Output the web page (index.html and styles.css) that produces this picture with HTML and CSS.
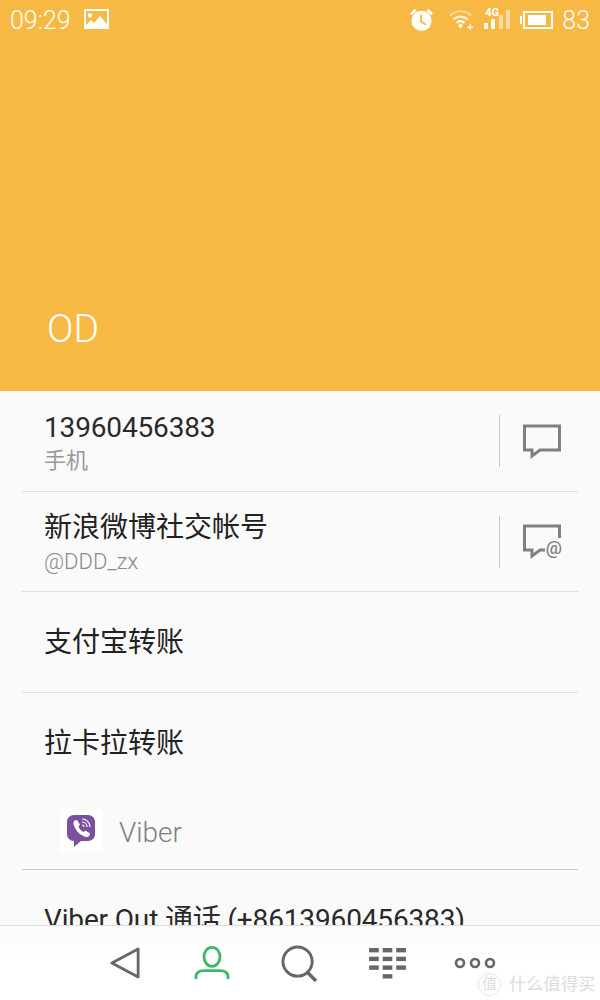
FILE: index.html
```html
<!DOCTYPE html>
<html lang="zh">
<head>
<meta charset="utf-8">
<title>OD</title>
<link rel="stylesheet" href="styles.css">
</head>
<body>
<div class="screen">
  <header class="hero">
    <div class="status">
      <div class="status-left">
        <span class="time">09:29</span>
        <svg class="ic-photo" width="25" height="20" viewBox="0 0 25 20"><path fill="#fff" fill-rule="evenodd" d="M0 0h25v20H0zM2 2v14l5-5 3 3 6-7 7 8V2z"/><circle cx="6" cy="6.500" r="2.200" fill="#fff"/></svg>
      </div>
      <div class="status-right">
        <svg class="ic-alarm" width="25" height="26" viewBox="0 0 26 26"><circle cx="13" cy="14" r="10.500" fill="#fff"/><path d="M2 7l5-4.500M24 7l-5-4.500" stroke="#fff" stroke-width="3" fill="none"/><path d="M12.500 7.500v7l5 3.500" stroke="#F7B944" stroke-width="2" fill="none"/></svg>
        <svg class="ic-wifi" width="25" height="22" viewBox="0 0 26 22"><path d="M1 7.500C7.500 1.500 16.500 1.500 23 7.500" stroke="#fff" stroke-opacity=".45" stroke-width="2.200" fill="none"/><path d="M4.500 11.500C9 7.500 15 7.500 19.500 11.500" stroke="#fff" stroke-opacity=".8" stroke-width="2.200" fill="none"/><path d="M8 15c2.500-2.200 5.500-2.200 8 0" stroke="#fff" stroke-width="2.200" fill="none"/><path d="M9.500 18l2.500-2.500 2.500 2.500-2.500 2.500z" fill="#fff"/><path d="M19 19.500h6M22 16.500v6" stroke="#fff" stroke-width="1.500"/></svg>
        <div class="signal">
          <span class="net">4G</span>
          <svg class="bars" width="27" height="19" viewBox="0 0 27 19"><rect x="0" y="13" width="4" height="6" fill="#fff"/><rect x="7" y="9" width="4" height="10" fill="#fff"/><rect x="15" y="5" width="4" height="14" fill="#fff" fill-opacity=".5"/><rect x="22" y="0" width="4" height="19" fill="#fff" fill-opacity=".5"/></svg>
        </div>
        <svg class="ic-batt" width="33" height="18" viewBox="0 0 33 18"><path fill="#fff" fill-rule="evenodd" d="M3 0h30v18H3zM5 2v14h26V2z"/><rect x="0" y="5" width="2" height="8" fill="#fff"/><rect x="8" y="4" width="18" height="10" fill="#fff"/></svg>
        <span class="batt">83</span>
      </div>
    </div>
    <div class="name">OD</div>
  </header>

  <main class="list">
    <div class="row tall">
      <div class="text">
        <div class="primary num">13960456383</div>
        <div class="secondary">手机</div>
      </div>
      <div class="action">
        <svg width="38" height="35" viewBox="0 0 38 35"><path d="M1.500 2h35v24H17l-8 6v-6H1.500z" fill="none" stroke="#808080" stroke-width="3"/></svg>
      </div>
    </div>
    <div class="row tall">
      <div class="text">
        <div class="primary">新浪微博社交帐号</div>
        <div class="secondary handle">@DDD_zx</div>
      </div>
      <div class="action">
        <div class="at-wrap">
          <svg width="38" height="35" viewBox="0 0 38 35"><path d="M22 26H17l-8 6v-6H1.500V2h35v12" fill="none" stroke="#808080" stroke-width="3"/></svg>
          <span class="at">@</span>
        </div>
      </div>
    </div>
    <div class="row plain"><div class="primary">支付宝转账</div></div>
    <div class="row plain last"><div class="primary">拉卡拉转账</div></div>
    <div class="section">
      <div class="app-tile">
        <svg width="30" height="34" viewBox="0 0 30 34"><path fill="#7B519D" d="M8 1h14c4 0 7 3 7 7v12c0 4-3 7-7 7H15l-7 6v-6c-4 0-7-3-7-7V8c0-4 3-7 7-7z"/><path fill="#fff" d="M8.500 6.500l2.500-.5 3 4.500-1.500 2c.8 2.300 2.700 4.300 5 5.500l2-1.500 4.500 3-.8 2.500c-1 1.200-2.500 1.300-4 .8-6-2.300-10-6.500-11.500-12-.3-1.500-.2-3.200.8-4.300z"/><path d="M16 5c4.500 0 8 3.500 8 8M16 8c2.800 0 5 2.200 5 5M16 11c1.200 0 2 .8 2 2" stroke="#fff" stroke-width="1.200" fill="none"/></svg>
      </div>
      <span class="section-label">Viber</span>
    </div>
    <div class="row cut"><div class="primary num">Viber Out 通话 (+8613960456383)</div></div>
  </main>

  <nav class="bar">
    <svg width="30" height="34" viewBox="0 0 32 34"><path d="M30 2v30L2 17z" fill="none" stroke="#666" stroke-width="3" stroke-linejoin="round"/></svg>
    <svg width="36" height="36" viewBox="0 0 38 36"><ellipse cx="19" cy="11.500" rx="8.500" ry="10" fill="none" stroke="#3DB86B" stroke-width="3"/><path d="M2 35v-2c0-6 5-7 9-7h16c4 0 9 1 9 7v2" fill="none" stroke="#3DB86B" stroke-width="3"/></svg>
    <svg width="37" height="37" viewBox="0 0 38 38"><circle cx="17" cy="17" r="15" fill="none" stroke="#666" stroke-width="3"/><path d="M27 28l9 9" stroke="#666" stroke-width="3.500"/></svg>
    <svg width="37" height="31" viewBox="0 0 38 32"><g fill="#666"><rect x="0" y="0" width="10" height="4.500"/><rect x="14" y="0" width="10" height="4.500"/><rect x="28" y="0" width="10" height="4.500"/><rect x="0" y="9" width="10" height="4.500"/><rect x="14" y="9" width="10" height="4.500"/><rect x="28" y="9" width="10" height="4.500"/><rect x="0" y="18" width="10" height="4.500"/><rect x="14" y="18" width="10" height="4.500"/><rect x="28" y="18" width="10" height="4.500"/><rect x="14" y="27" width="10" height="4.500"/></g></svg>
    <svg width="42" height="12" viewBox="0 0 42 12"><g fill="none" stroke="#666" stroke-width="2.600"><circle cx="6" cy="6" r="4"/><circle cx="21" cy="6" r="4"/><circle cx="36" cy="6" r="4"/></g></svg>
    <div class="watermark"><span class="wm-circle">值</span><span class="wm-text">什么值得买</span></div>
  </nav>
</div>
</body>
</html>
```

FILE: styles.css
```css
* { box-sizing: border-box; }
html, body { margin: 0; padding: 0; }
body {
  font-family: Roboto, "Noto Sans CJK SC", sans-serif;
  background: #fafafa;
  color: #222;
}
.screen {
  width: 600px;
  height: 1000px;
  display: flex;
  flex-direction: column;
  overflow: hidden;
  position: relative;
}
.hero {
  height: 391px;
  flex: none;
  background: #f7b944;
  color: #fff;
  display: flex;
  flex-direction: column;
  justify-content: space-between;
}
.status {
  display: flex;
  justify-content: space-between;
  align-items: center;
  height: 40px;
  padding: 0 10px;
}
.status-left, .status-right { display: flex; align-items: center; }
.time, .batt { font-size: 25px; font-weight: 300; }
.ic-photo { margin-left: 13px; margin-top: -3px; }
.status-right svg { flex: none; }
.ic-alarm { margin-right: 1px; }
.ic-wifi { margin-left: 14px; margin-top: -2px; }
.signal { position: relative; margin-left: 10px; width: 27px; height: 26px; }
.bars { position: absolute; left: 0; top: 3px; }
.net {
  position: absolute;
  left: 1px;
  top: -1px;
  font-size: 11px;
  line-height: 13px;
  font-weight: 700;
}
.ic-batt { margin-left: 9px; }
.batt { margin-left: 9px; }
.name {
  font-size: 39px;
  font-weight: 300;
  padding: 0 0 41px 47px;
  line-height: 42px;
}
.list {
  flex: 1;
  min-height: 0;
  overflow: hidden;
  margin: 0 22px;
}
.row {
  display: flex;
  align-items: center;
  border-bottom: 1px solid #ddd;
  padding-left: 22px;
}
.tall { height: 100.500px; justify-content: space-between; }
.plain { height: 100.500px; }
.last { border-bottom: none; }
.text { display: flex; flex-direction: column; padding-top: 4px; }
.primary { font-size: 28px; line-height: 36px; color: #222; white-space: nowrap; }
.num { letter-spacing: -.15px; color: #2a2a2a; }
.plain .primary { padding-top: 2px; }
.secondary { font-size: 22px; line-height: 30px; color: #999; }
.handle { font-weight: 300; margin-top: 1px; color: #8a8a8a; }
.action {
  height: 52px;
  width: 79px;
  margin-top: 1px;
  border-left: 1px solid #c8c8c8;
  display: flex;
  align-items: center;
  padding-left: 23px;
  flex: none;
}
.at-wrap { position: relative; width: 38px; height: 35px; display: flex; }
.at {
  position: absolute;
  right: -1px;
  bottom: 2px;
  font-size: 18px;
  line-height: 18px;
  font-weight: 500;
  color: #808080;
}
.section {
  height: 77px;
  display: flex;
  align-items: center;
  border-bottom: 1px solid #c8c8c8;
  padding: 0 0 0 38px;
}
.app-tile {
  width: 42px;
  height: 42px;
  background: #fff;
  display: flex;
  align-items: center;
  justify-content: center;
}
.section-label {
  font-size: 28px;
  font-weight: 300;
  color: #808080;
  margin-left: 17px;
  padding-top: 2px;
}
.cut { border: none; height: 100px; align-items: flex-start; padding-top: 32px; }
.bar {
  height: 75px;
  flex: none;
  background: linear-gradient(#fbfbfb, #fff 45%);
  border-top: 1px solid #ddd;
  position: relative;
  display: grid;
  grid-template-columns: repeat(5, 87.500px);
  align-items: center;
  justify-items: center;
  padding: 0 0 0 81px;
}
.watermark {
  position: absolute;
  left: 478px;
  top: 46px;
  display: flex;
  align-items: center;
  gap: 8px;
  font-size: 17px;
  line-height: 24px;
  color: #dcdcdc;
  white-space: nowrap;
}
.wm-circle {
  flex: none;
  width: 23px;
  height: 23px;
  border: 1px solid #e6e6e6;
  border-radius: 50%;
  font-size: 15px;
  text-align: center;
  line-height: 21px;
}
.wm-text { letter-spacing: .3px; }
```
